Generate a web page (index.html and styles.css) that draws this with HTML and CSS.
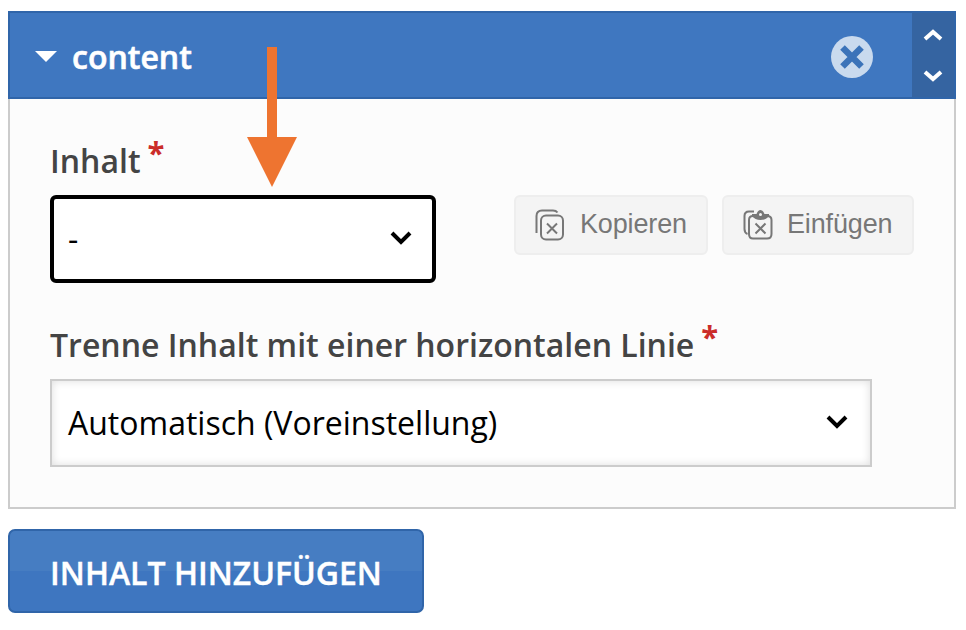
FILE: index.html
```html
<!DOCTYPE html>
<html lang="de">
<head>
<meta charset="utf-8">
<title>content</title>
<link rel="stylesheet" href="styles.css">
</head>
<body>
<section class="panel">
  <header class="head">
    <svg class="caret" width="22" height="11" viewBox="0 0 22 11"><path d="M0 0H22L11 11Z" fill="#fff"/></svg>
    <h2>content</h2>
    <button class="close" aria-label="Entfernen"><svg width="42" height="42" viewBox="0 0 42 42"><circle cx="21" cy="21" r="21" fill="#c9daee"/><path d="M11.500 11.500L30.500 30.500M30.500 11.500L11.500 30.500" stroke="#3b73b9" stroke-width="6.500"/></svg></button>
    <div class="sort">
      <svg width="20" height="12" viewBox="0 0 20 12"><path d="M2 10L10 3L18 10"/></svg>
      <svg width="20" height="12" viewBox="0 0 20 12"><path d="M2 2L10 9L18 2"/></svg>
    </div>
  </header>
  <div class="body">
    <div class="label"><span>Inhalt</span><span class="star">*</span></div>
    <div class="row">
      <div class="select focus"><span>-</span><svg width="22" height="14" viewBox="0 0 22 14"><path d="M2 2L11 11L20 2"/></svg></div>
      <button class="tool copy"><svg width="30" height="32" viewBox="0 0 30 32"><path d="M1.500 24V7Q1.500 1.500 7 1.500H18Q21 1.500 22.500 3.500"/><rect x="6" y="6.500" width="22" height="24" rx="5"/><path d="M12 14.500L22 24.500M22 14.500L12 24.500"/></svg><span>Kopieren</span></button>
      <button class="tool paste"><svg width="30" height="32" viewBox="0 0 30 32"><path d="M4.500 25Q1.500 24 1.500 20V7Q1.500 2.500 6 2.500H11"/><path d="M12 7H10Q6 7 6 11V25Q6 29.500 10 29.500H24Q28.500 29.500 28.500 25V11Q28.500 7 24 7H23"/><path class="clip" fill-rule="evenodd" d="M9 5H13.500Q15 1 17.500 1T21.500 5H26V7Q23 11 17.500 11T9 7ZM17.500 4A1.500 1.500 0 1 0 17.500 7A1.500 1.500 0 1 0 17.500 4Z"/><path d="M12.500 14.500L22.500 24.500M22.500 14.500L12.500 24.500"/></svg><span>Einfügen</span></button>
    </div>
    <div class="label second"><span>Trenne Inhalt mit einer horizontalen Linie</span><span class="star">*</span></div>
    <div class="select wide"><span>Automatisch (Voreinstellung)</span><svg width="22" height="14" viewBox="0 0 22 14"><path d="M2 2L11 11L20 2"/></svg></div>
  </div>
</section>
<button class="add"><span>INHALT HINZUFÜGEN</span></button>
<svg class="arrow" width="50" height="140" viewBox="0 0 50 140"><path d="M20 0H30V90H50L25 140L0 90H20Z" fill="#ee7430"/></svg>
</body>
</html>
```
FILE: styles.css
```css
*{box-sizing:border-box}
body{margin:0;padding:11px 10px 0 8px;height:630px;overflow:hidden;background:#fff;font-family:"Open Sans",sans-serif;color:#444}
button{font:inherit;margin:0;padding:0}
svg{display:block;flex:none}
.panel{height:498px;border:2px solid #ccc;border-top:0;background:#fcfcfc}
.head{height:88px;margin:0 -2px;display:flex;align-items:center;background:#3f77c0;border:2px solid #3065a9}
.caret{margin:2px 0 0 25px}
h2{margin:4px 0 0 15px;font-size:32px;line-height:44px;font-weight:600;color:#fff;-webkit-text-stroke:.6px #fff}
.close{margin:4px 39px 0 auto;border:0;background:none}
.sort{width:42px;height:84px;background:#3564a1;display:flex;flex-direction:column;align-items:center;justify-content:center;gap:29px}
.sort path{fill:none;stroke:#fff;stroke-width:4}
.body{padding:40px 40px 0}
.label{display:flex;height:44px;font-size:32px;line-height:44px;font-weight:600;white-space:nowrap}
.star{margin:-9px 0 0 7px;color:#cb2d2a;font-size:31px;font-weight:700}
.row{display:flex;margin-top:12px}
.select{height:88px;border:2px solid #ccc;background:#fff;display:flex;align-items:center;justify-content:space-between;padding:0 22px 2px 16px;font-size:32px;color:#000}
.select path{fill:none;stroke:#000;stroke-width:4}
.focus{width:386px;border:4px solid #000;border-radius:6px;padding:0 20px 2px 14px}
.wide{width:822px;margin-top:12px;box-shadow:inset 0 0 8px #ddd}
.tool{height:60px;border:2px solid #eee;border-radius:6px;background:#f4f4f4;display:flex;align-items:center;padding-left:19px;font:27px "Liberation Sans",sans-serif;color:#777}
.tool svg path,.tool rect{fill:none;stroke:#777;stroke-width:2}
.tool svg .clip{fill:#777;stroke:none}
.tool span{margin:-2px 0 0 14px;letter-spacing:-.15px}
.copy{width:194px;margin-left:78px}
.copy span{margin-left:15px}
.paste{width:192px;margin-left:14px}
.second{margin-top:40px}
.add{display:flex;align-items:center;justify-content:center;margin-top:20px;width:416px;height:84px;border:2px solid #3065a9;border-radius:7px;background:linear-gradient(#467dc2 50%,#3e76c0 50%);font-size:32px;font-weight:600;color:#fff;padding-top:2px;-webkit-text-stroke:.4px #fff}
.arrow{position:absolute;left:247px;top:47px}
```
